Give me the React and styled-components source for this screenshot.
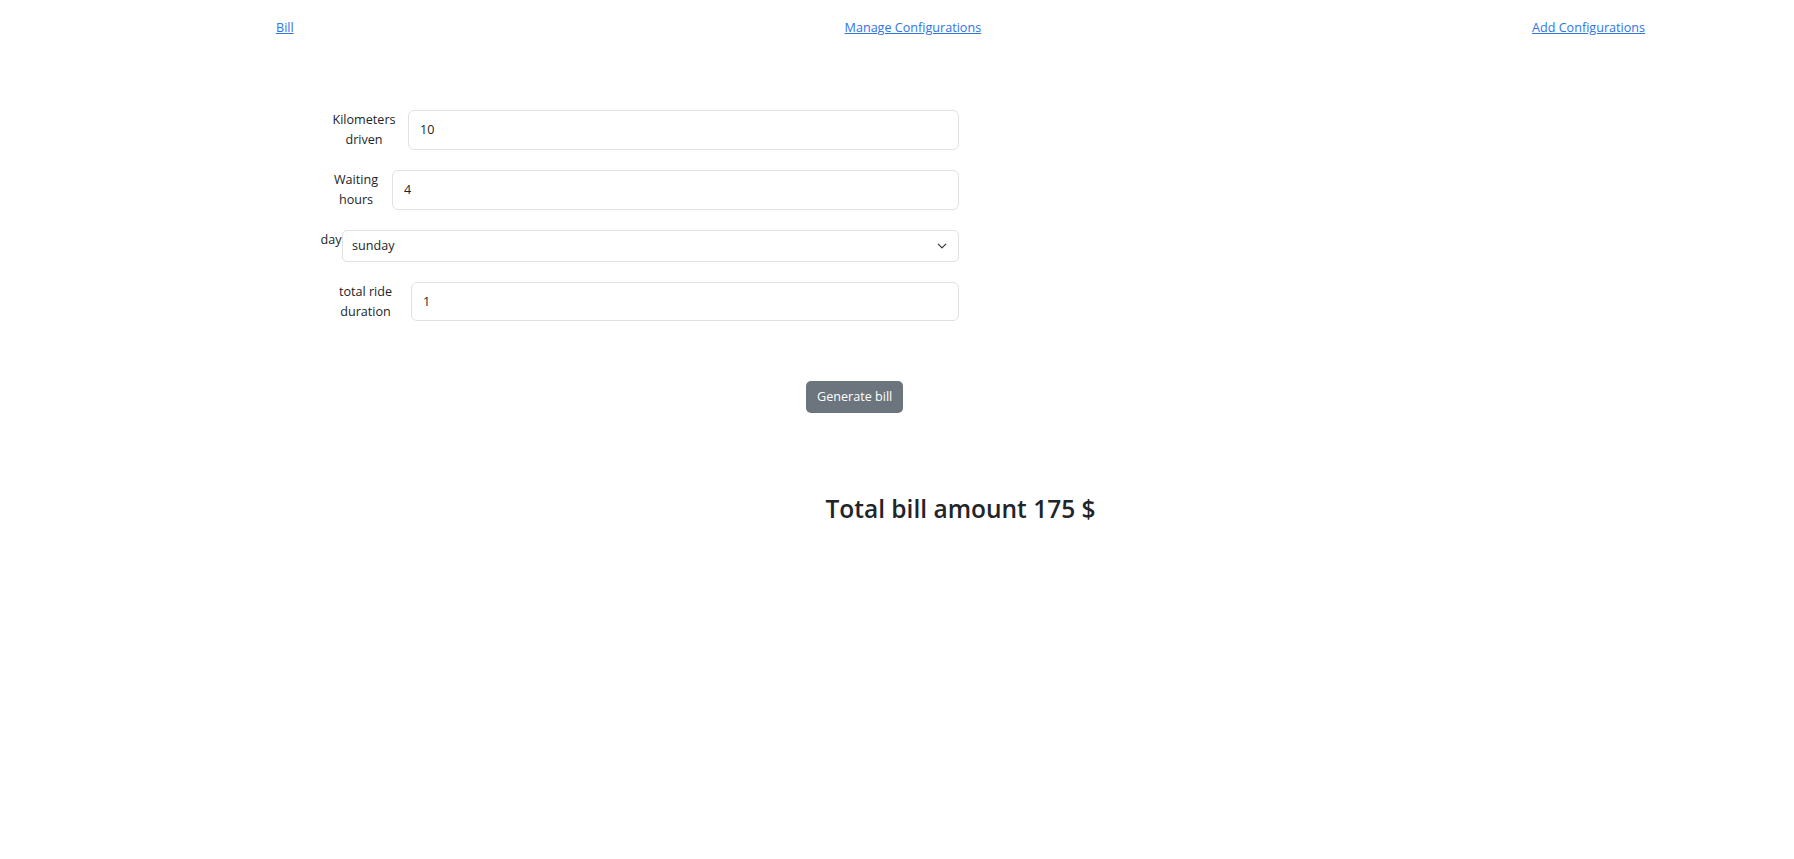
import React from "react";
import styled, { createGlobalStyle } from "styled-components";

const GlobalStyle = createGlobalStyle`
  html, body { margin: 0; padding: 0; background: #fff; }
  body {
    font-family: "Open Sans", "Noto Sans", sans-serif;
    font-size: 12.6px;
    line-height: 1.5;
    color: #212529;
  }
  * { box-sizing: border-box; }
`;

const Container = styled.div`
  margin-left: 276px;
  width: 1369px;
`;

const Nav = styled.nav`
  display: flex;
  justify-content: space-between;
  padding-top: 18px;
`;

const NavLink = styled.a`
  color: #2f73e8;
  text-decoration: underline;
  font-size: 12.6px;
  line-height: 20px;
  cursor: pointer;
`;

const Form = styled.form`
  margin: 72px 0 0 44px;
  width: 639px;
`;

const Row = styled.div`
  display: flex;
  align-items: flex-start;
  margin-bottom: 20px;
`;

const Label = styled.label`
  flex: 0 0 ${(p) => p.$w}px;
  text-align: center;
  line-height: 20px;
  font-size: 12.6px;
  color: #212529;
`;

const Input = styled.input`
  flex: 1;
  min-width: 0;
  height: 39.5px;
  padding: 0 11px;
  border: 1px solid #dee2e6;
  border-radius: 6px;
  font-family: inherit;
  font-size: 12.6px;
  color: #212529;
  background: #fff;
  outline: none;
`;

const SelectWrap = styled.div`
  position: relative;
  flex: 1;
`;

const Select = styled.select`
  width: 100%;
  height: 31.5px;
  padding: 0 30px 0 9px;
  border: 1px solid #dee2e6;
  border-radius: 5px;
  font-family: inherit;
  font-size: 12.6px;
  color: #212529;
  background: #fff;
  appearance: none;
  -webkit-appearance: none;
  outline: none;
`;

const Chevron = styled.svg`
  position: absolute;
  right: 11px;
  top: 11px;
  pointer-events: none;
`;

const ButtonRow = styled.div`
  padding: 39px 0 0 486px;
`;

const Button = styled.button`
  height: 32px;
  padding: 0 11px;
  border: none;
  border-radius: 5px;
  background: #6c757d;
  color: #fff;
  font-family: inherit;
  font-size: 12.6px;
  cursor: pointer;
`;

const Total = styled.h3`
  margin: 81px 0 0;
  text-align: center;
  font-size: 24.5px;
  font-weight: 600;
  line-height: 1.2;
  color: #212529;
`;

export default function App() {
  return (
    <>
      <GlobalStyle />
      <Container>
        <Nav>
          <NavLink href="#">Bill</NavLink>
          <NavLink href="#">Manage Configurations</NavLink>
          <NavLink href="#">Add Configurations</NavLink>
        </Nav>
        <Form onSubmit={(e) => e.preventDefault()}>
          <Row>
            <Label $w={88}>Kilometers driven</Label>
            <Input defaultValue="10" />
          </Row>
          <Row>
            <Label $w={72}>Waiting hours</Label>
            <Input defaultValue="4" />
          </Row>
          <Row>
            <Label $w={22}>day</Label>
            <SelectWrap>
              <Select defaultValue="sunday">
                <option value="monday">monday</option>
                <option value="tuesday">tuesday</option>
                <option value="wednesday">wednesday</option>
                <option value="thursday">thursday</option>
                <option value="friday">friday</option>
                <option value="saturday">saturday</option>
                <option value="sunday">sunday</option>
              </Select>
              <Chevron width="12" height="10" viewBox="0 0 16 16">
                <path
                  d="m2 5 6 6 6-6"
                  fill="none"
                  stroke="#343a40"
                  strokeWidth="2"
                  strokeLinecap="round"
                  strokeLinejoin="round"
                />
              </Chevron>
            </SelectWrap>
          </Row>
          <Row>
            <Label $w={91}>total ride duration</Label>
            <Input defaultValue="1" />
          </Row>
          <ButtonRow>
            <Button type="submit">Generate bill</Button>
          </ButtonRow>
        </Form>
        <Total>Total bill amount 175 $</Total>
      </Container>
    </>
  );
}
